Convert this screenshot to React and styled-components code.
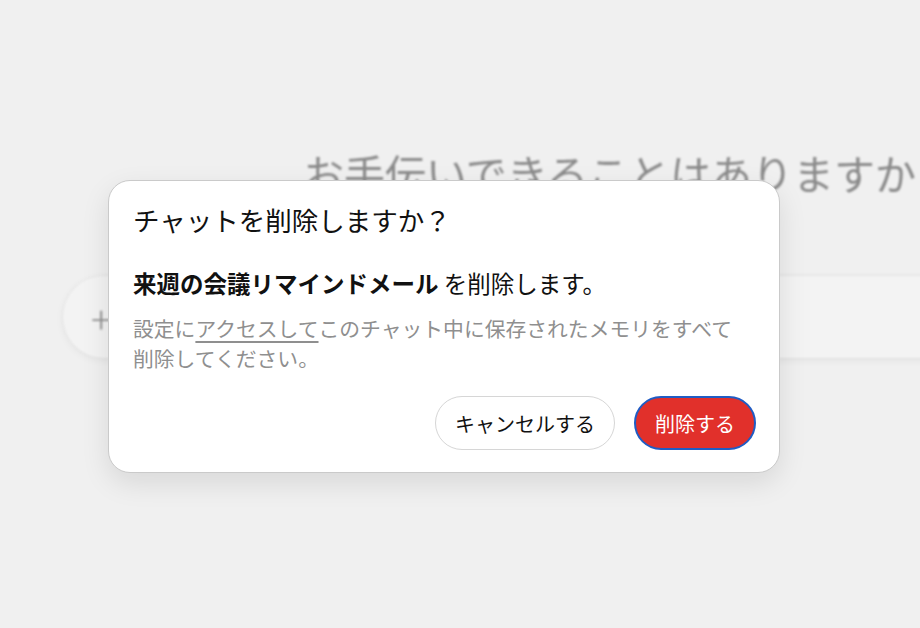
import styled, { createGlobalStyle } from "styled-components";

const GlobalStyle = createGlobalStyle`
  html, body {
    margin: 0;
    padding: 0;
    background: #f0f0f0;
  }
  body {
    font-family: "Noto Sans CJK JP", "Noto Sans", sans-serif;
  }
`

const Page = styled.div`
  position: relative;
  width: 920px;
  height: 628px;
  overflow: hidden;
  background: #f0f0f0;
`

const Backdrop = styled.div`
  display: flex;
  flex-direction: column;
  padding-top: 143px;
  filter: blur(1px);
`

const Greeting = styled.h1`
  margin: 0 0 0 303px;
  font-size: 41px;
  line-height: 58px;
  font-weight: 400;
  color: #8a8a8a;
  white-space: nowrap;
`

const Composer = styled.div`
  display: flex;
  align-items: center;
  width: 900px;
  height: 82px;
  margin: 75px 0 0 63px;
  padding-left: 28px;
  box-sizing: border-box;
  border-radius: 41px;
  background: #f3f3f3;
  box-shadow: 0 2px 8px rgba(0, 0, 0, 0.06), 0 0 0 1px rgba(0, 0, 0, 0.03);
  color: #8f8f8f;
  font-size: 38px;
  font-weight: 300;
`

const Overlay = styled.div`
  position: absolute;
  inset: 0;
  padding: 180px 0 0 108px;
`

const Dialog = styled.div`
  display: flex;
  flex-direction: column;
  width: 672px;
  box-sizing: border-box;
  padding: 21px 23px 22px 24px;
  background: #fff;
  border: 1px solid #cacaca;
  border-radius: 22px;
  box-shadow: 0 10px 28px rgba(0, 0, 0, 0.1);
`

const Title = styled.h2`
  margin: 0;
  font-size: 26.5px;
  line-height: 36px;
  font-weight: 400;
  color: #111;
`

const Lead = styled.p`
  margin: 28px 0 0;
  font-size: 23.5px;
  line-height: 34px;
  color: #111;

  strong { font-weight: 700; }
`

const Note = styled.p`
  max-width: 610px;
  margin: 13px 0 0;
  font-size: 20.8px;
  line-height: 30px;
  color: #8f8f8f;

  a {
    color: inherit;
    text-decoration: underline;
    text-underline-offset: 4px;
    text-decoration-thickness: 1.5px;
  }
`

const Actions = styled.div`
  display: flex;
  justify-content: flex-end;
  gap: 19px;
  margin-top: 23px;
`

const Button = styled.button`
  height: 54px;
  padding: 0 19px;
  box-sizing: border-box;
  border-radius: 27px;
  font-family: inherit;
  font-size: 20px;
  cursor: pointer;
  border: ${p => p.$danger ? "2.5px solid #1f5cc4" : "1px solid #d6d6d6"};
  background: ${p => p.$danger ? "#e1302b" : "#fff"};
  color: ${p => p.$danger ? "#fff" : "#111"};
`

export default function App() {
    return (
        <Page>
            <GlobalStyle />
            <Backdrop>
                <Greeting>お手伝いできることはありますか？</Greeting>
                <Composer>+</Composer>
            </Backdrop>

            <Overlay>
                <Dialog>
                    <Title>チャットを削除しますか？</Title>
                    <Lead><strong>来週の会議リマインドメール</strong> を削除します。</Lead>
                    <Note>
                        設定に<a href="#">アクセスして</a>このチャット中に保存されたメモリをすべて削除してください。
                    </Note>
                    <Actions>
                        <Button>キャンセルする</Button>
                        <Button $danger>削除する</Button>
                    </Actions>
                </Dialog>
            </Overlay>
        </Page>
    )
}
